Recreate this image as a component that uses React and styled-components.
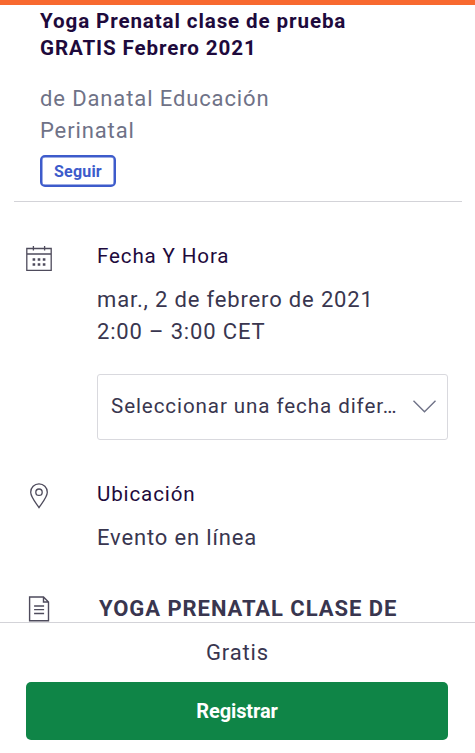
import React from "react";
import styled, { createGlobalStyle } from "styled-components";

const App = () => {
  return (
    <Page>
      <GlobalStyle />
      <Content>
        <Header>
          <Title>
            Yoga Prenatal clase de prueba
            <br />
            GRATIS Febrero 2021
          </Title>
          <Organizer>
            de Danatal Educación
            <br />
            Perinatal
          </Organizer>
          <Follow>Seguir</Follow>
        </Header>

        <Section $top={41}>
          <IconBlock $top={2}>
            <CalendarIcon />
          </IconBlock>
          <Info>
            <Label>Fecha Y Hora</Label>
            <Text>
              mar., 2 de febrero de 2021
              <br />
              2:00 – 3:00 CET
            </Text>
            <Select>
              <SelectText>Seleccionar una fecha difer…</SelectText>
              <ChevronIcon />
            </Select>
          </Info>
        </Section>

        <Section $top={41}>
          <IconBlock $top={2}>
            <PinIcon />
          </IconBlock>
          <Info>
            <Label>Ubicación</Label>
            <Text>Evento en línea</Text>
          </Info>
        </Section>

        <Section $top={39}>
          <IconBlock $top={3}>
            <DocumentIcon />
          </IconBlock>
          <Description>YOGA PRENATAL CLASE DE</Description>
        </Section>
      </Content>

      <Footer>
        <Price>Gratis</Price>
        <Register>Registrar</Register>
      </Footer>
    </Page>
  );
};

export default App;

const CalendarIcon = () => (
  <svg width="26" height="26" viewBox="0 0 26 26" fill="none" stroke="#4e4b5c" strokeWidth="1.3">
    <path d="M.8 3.5h24.4v21.8H.8zM.8 9h24.4M7.4.9v4.6M18.6.9v4.6" />
    <path d="M6.6 14.5h12.8M6.6 19.5h12.8" strokeWidth="2.6" strokeDasharray="2.6 2.5" />
  </svg>
);

const PinIcon = () => (
  <svg width="26" height="26" viewBox="0 0 26 26" fill="none" stroke="#4e4b5c" strokeWidth="1.3">
    <path d="M13 24.6C10.5 20.7 4.7 14 4.7 9.2a8.3 8.3 0 0 1 16.6 0C21.3 14 15.5 20.7 13 24.6z" />
    <circle cx="13" cy="9.2" r="3.2" />
  </svg>
);

const DocumentIcon = () => (
  <svg width="26" height="26" viewBox="0 0 26 26" fill="none" stroke="#4e4b5c" strokeWidth="1.4">
    <path d="M3.6 1h13.9l5 5v18.7H3.6zM17.5 1v5h5" />
    <path d="M8.1 10h10M8.1 13.6h10M8.1 17.5h10" />
  </svg>
);

const ChevronIcon = () => (
  <svg width="24" height="14" viewBox="0 0 24 14" fill="none" stroke="#6f7287" strokeWidth="1.4">
    <path d="M1.5 1.8l11 10.9 11-10.9" />
  </svg>
);

const GlobalStyle = createGlobalStyle`
  * {
    box-sizing: border-box;
  }
  body {
    margin: 0;
    background-color: #fff;
    font-family: Roboto, "Liberation Sans", sans-serif;
  }
`;

const Page = styled.div`
  display: flex;
  flex-direction: column;
  height: 753px;
  border-top: 5px solid #f8692f;
  background-color: #fff;
  overflow: hidden;
`;
const Content = styled.main`
  flex: 1;
  min-height: 0;
  overflow: hidden;
`;
const Header = styled.header`
  height: 197px;
  margin: 0 13px 0 14px;
  padding: 3px 0 0 26px;
  border-bottom: 1px solid #d3d3d8;
`;
const Title = styled.h1`
  margin: 0;
  font-size: 20.6px;
  font-weight: 700;
  line-height: 26.5px;
  letter-spacing: 0.88px;
  color: #1e0a3c;
  white-space: nowrap;
`;
const Organizer = styled.p`
  margin: 22px 0 0;
  font-size: 22px;
  line-height: 31.6px;
  letter-spacing: 0.88px;
  color: #6f7287;
`;
const Follow = styled.button`
  display: block;
  width: 76px;
  height: 32px;
  margin-top: 9px;
  padding: 0;
  border: 2px solid #3d5bcb;
  border-radius: 5px;
  box-shadow: inset 0 0 0 0.5px #3d5bcb;
  background-color: #fff;
  font-family: inherit;
  font-size: 16px;
  font-weight: 700;
  letter-spacing: 0.2px;
  color: #3d5bcb;
`;
const Section = styled.section`
  display: flex;
  align-items: flex-start;
  padding: 0 27px 0 26px;
  margin-top: ${({ $top }) => $top}px;
`;
const IconBlock = styled.div`
  display: flex;
  flex: 0 0 71px;
  padding-top: ${({ $top }) => $top}px;
`;
const Info = styled.div`
  flex: 1;
  min-width: 0;
`;
const Label = styled.h2`
  margin: 0 0 15px;
  font-size: 20.6px;
  font-weight: 400;
  line-height: 26px;
  letter-spacing: 0.85px;
  color: #1e0a3c;
`;
const Text = styled.p`
  margin: 0;
  font-size: 22px;
  line-height: 31.6px;
  letter-spacing: 0.84px;
  color: #39364f;
  white-space: nowrap;
`;
const Description = styled(Text)`
  padding-left: 2px;
  font-weight: 700;
  letter-spacing: 0.94px;
`;
const Select = styled.div`
  display: flex;
  align-items: center;
  justify-content: space-between;
  height: 66px;
  margin-top: 27px;
  padding: 0 11px 2px 13px;
  border: 1px solid #d9d9de;
  border-radius: 3px;
`;
const SelectText = styled.span`
  padding-bottom: 1px;
  font-size: 20.6px;
  letter-spacing: 0.9px;
  color: #39364f;
  white-space: nowrap;
`;
const Footer = styled.footer`
  height: 131px;
  padding: 13px 27px 0 26px;
  border-top: 1px solid #d3d3d8;
  background-color: #fff;
`;
const Price = styled.p`
  margin: 0 0 13px;
  padding-left: 1px;
  font-size: 22px;
  line-height: 33px;
  letter-spacing: 0.84px;
  text-align: center;
  color: #39364f;
`;
const Register = styled.button`
  display: block;
  width: 100%;
  height: 58px;
  padding: 0;
  border: 0;
  border-radius: 5px;
  background-color: #0f8547;
  font-family: inherit;
  font-size: 20px;
  font-weight: 700;
  letter-spacing: -0.1px;
  color: #fff;
`;
